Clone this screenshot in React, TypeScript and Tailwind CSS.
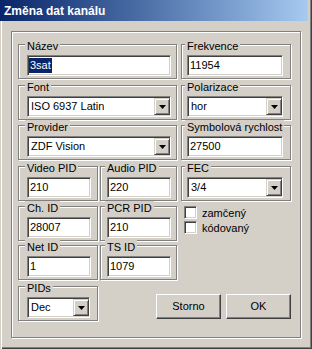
import { ReactNode } from "react";

const sunken =
  "border border-t-[#808080] border-l-[#808080] border-b-white border-r-white shadow-[inset_1px_1px_0_#404040,inset_-1px_-1px_0_#d4d0c8]";
const raised =
  "border border-t-[#d4d0c8] border-l-[#d4d0c8] border-b-[#404040] border-r-[#404040] shadow-[inset_1px_1px_0_#fff,inset_-1px_-1px_0_#808080]";

// label sits over the top line, lined up with the field below it
const Group = ({
  label,
  className,
  pad,
  labelMl,
  children,
}: {
  label: string;
  className: string;
  pad: string;
  labelMl: string;
  children: ReactNode;
}) => {
  return (
    <div
      className={`flex flex-col h-[35px] border border-[#808080] shadow-[inset_1px_1px_0_#fff,1px_1px_0_#fff] ${className}`}
    >
      <span
        className={`-mt-[6px] self-start bg-[#d4d0c8] px-[2px] leading-[14px] whitespace-nowrap ${labelMl}`}
      >
        {label}
      </span>
      <div className={`mt-[2px] ${pad}`}>{children}</div>
    </div>
  );
};

const Edit = ({ value, w, selected }: { value: string; w: string; selected?: boolean }) => {
  return (
    <div className={`h-[21px] bg-white flex items-center pl-[1px] ${sunken} ${w}`}>
      {selected ? (
        <span className="bg-[#0a246a] text-white px-[1px] leading-[15px]">{value}</span>
      ) : (
        <span className="pl-[1px] leading-[15px]">{value}</span>
      )}
    </div>
  );
};

const Combo = ({ value, w }: { value: string; w: string }) => {
  return (
    <div className={`h-[21px] bg-white flex items-center ${sunken} ${w}`}>
      <span className="flex-1 pl-[3px] leading-[15px] whitespace-nowrap">{value}</span>
      <div className={`w-[16px] h-[17px] flex items-center justify-center bg-[#d4d0c8] ${raised}`}>
        <svg width="7" height="4" viewBox="0 0 7 4">
          <path d="M0 0h7L3.5 4z" fill="#000" />
        </svg>
      </div>
    </div>
  );
};

const Check = ({ label }: { label: string }) => {
  return (
    <div className="flex items-center gap-[5px] h-[13px]">
      <div className={`w-[13px] h-[13px] bg-white ${sunken}`}></div>
      <span className="leading-[14px]">{label}</span>
    </div>
  );
};

const Button = ({ text }: { text: string }) => {
  return (
    <div className="w-[65px] h-[25px] flex items-center justify-center bg-[#d4d0c8] border border-t-white border-l-white border-b-[#404040] border-r-[#404040] shadow-[inset_-1px_-1px_0_#808080]">
      {text}
    </div>
  );
};

const App = () => {
  return (
    <div className="w-[312px] h-[349px] bg-[#d4d0c8] flex flex-col font-['Liberation_Sans',Arial,sans-serif] text-[11px] text-black shadow-[inset_1px_0_0_#d4d0c8,inset_2px_0_0_#fff,inset_-1px_-1px_0_#404040,inset_-2px_-2px_0_#808080]">
      {/* title bar */}
      <div className="h-[21px] w-[308px] flex items-center pl-[4px] bg-linear-to-r from-[#0a246a] to-[#a6caf0] text-white font-bold text-[12px]">
        Změna dat kanálu
      </div>

      <div className="ml-[11px] mt-[10px] w-[290px] h-[307px] border border-[#808080] shadow-[inset_1px_1px_0_#fff,1px_1px_0_#fff] pl-[6px] pt-[12px] flex flex-col">
        <div className="flex gap-[4px]">
          <Group label="Název" className="w-[159px]" pad="pl-[8px]" labelMl="ml-[6px]">
            <Edit value="3sat" w="w-[144px]" selected />
          </Group>
          <Group label="Frekvence" className="w-[110px]" pad="pl-[5px]" labelMl="ml-[3px]">
            <Edit value="11954" w="w-[96px]" />
          </Group>
        </div>

        <div className="flex gap-[4px] mt-[6px]">
          <Group label="Font" className="w-[159px]" pad="pl-[8px]" labelMl="ml-[6px]">
            <Combo value="ISO 6937 Latin" w="w-[144px]" />
          </Group>
          <Group label="Polarizace" className="w-[110px]" pad="pl-[5px]" labelMl="ml-[3px]">
            <Combo value="hor" w="w-[96px]" />
          </Group>
        </div>

        <div className="flex gap-[4px] mt-[5px]">
          <Group label="Provider" className="w-[159px]" pad="pl-[8px]" labelMl="ml-[6px]">
            <Combo value="ZDF Vision" w="w-[144px]" />
          </Group>
          <Group label="Symbolová rychlost" className="w-[110px]" pad="pl-[5px]" labelMl="ml-[3px]">
            <Edit value="27500" w="w-[96px]" />
          </Group>
        </div>

        <div className="flex gap-[4px] mt-[6px]">
          <div className="flex gap-[2px] w-[159px]">
            <Group label="Video PID" className="w-[80px]" pad="pl-[8px]" labelMl="ml-[6px]">
              <Edit value="210" w="w-[64px]" />
            </Group>
            <Group label="Audio PID" className="w-[77px]" pad="pl-[6px]" labelMl="ml-[4px]">
              <Edit value="220" w="w-[64px]" />
            </Group>
          </div>
          <Group label="FEC" className="w-[110px]" pad="pl-[5px]" labelMl="ml-[3px]">
            <Combo value="3/4" w="w-[96px]" />
          </Group>
        </div>

        <div className="flex gap-[4px] mt-[5px]">
          <div className="flex gap-[2px] w-[159px]">
            <Group label="Ch. ID" className="w-[80px]" pad="pl-[8px]" labelMl="ml-[6px]">
              <Edit value="28007" w="w-[64px]" />
            </Group>
            <Group label="PCR PID" className="w-[77px]" pad="pl-[6px]" labelMl="ml-[4px]">
              <Edit value="210" w="w-[64px]" />
            </Group>
          </div>
          <div className="flex flex-col gap-[2px] pl-[3px]">
            <Check label="zamčený" />
            <Check label="kódovaný" />
          </div>
        </div>

        <div className="flex gap-[4px] mt-[4px]">
          <div className="flex gap-[2px] w-[159px]">
            <Group label="Net ID" className="w-[80px]" pad="pl-[8px]" labelMl="ml-[6px]">
              <Edit value="1" w="w-[64px]" />
            </Group>
            <Group label="TS ID" className="w-[77px]" pad="pl-[6px]" labelMl="ml-[4px]">
              <Edit value="1079" w="w-[64px]" />
            </Group>
          </div>
        </div>

        <div className="flex mt-[6px]">
          <Group label="PIDs" className="w-[80px]" pad="pl-[8px]" labelMl="ml-[6px]">
            <Combo value="Dec" w="w-[63px]" />
          </Group>
          <div className="flex gap-[5px] ml-[58px] mt-[8px]">
            <Button text="Storno" />
            <Button text="OK" />
          </div>
        </div>
      </div>
    </div>
  );
};

export default App;
